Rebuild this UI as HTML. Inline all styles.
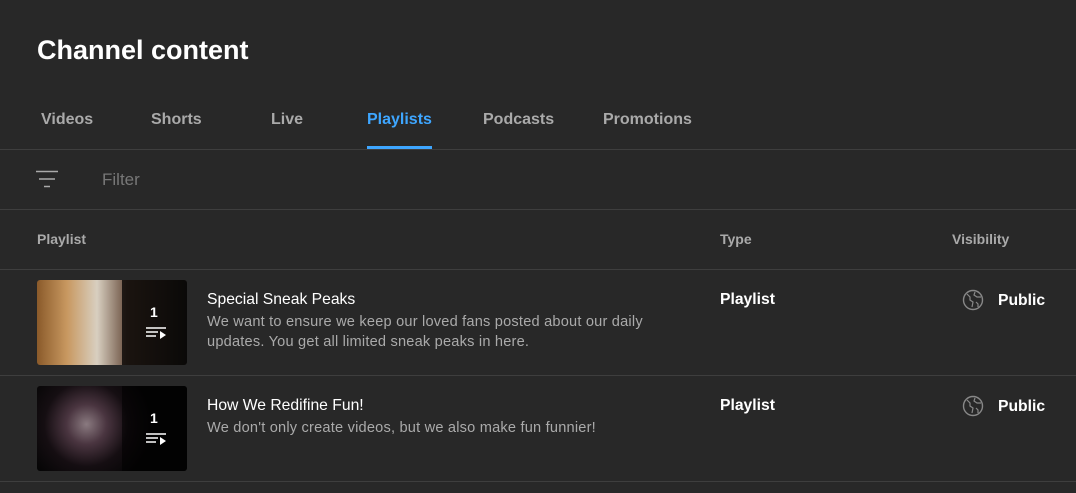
<!DOCTYPE html>
<html><head><style>
body{margin:0;width:1076px;height:493px;background:#282828;font-family:"Liberation Sans",sans-serif;position:relative;overflow:hidden;color:#fff}
.a{position:absolute;white-space:nowrap}
.tab{position:absolute;top:111px;font-size:16px;font-weight:bold;color:#aaa}
.line{position:absolute;left:0;width:1076px;height:1px;background:#3e3e3e}
.hd{position:absolute;top:231px;font-size:14px;color:#aaa;font-weight:bold}
.t{font-size:15.7px;color:#fff}
.d{font-size:14.6px;color:#aaa;line-height:20px;letter-spacing:0.2px}
.thumb{position:absolute;left:37px;width:150px;height:85px;border-radius:3px;overflow:hidden}
.ov{position:absolute;right:0;top:0;width:65px;height:85px;background:rgba(0,0,0,.75)}
.n{position:absolute;left:28px;top:24px;font-size:14px;font-weight:bold}
</style></head><body>
<div class="a" style="left:37px;top:35px;font-size:27px;font-weight:bold">Channel content</div>
<div class="tab" style="left:41px">Videos</div>
<div class="tab" style="left:151px">Shorts</div>
<div class="tab" style="left:271px">Live</div>
<div class="tab" style="left:367px;color:#3ea6ff">Playlists</div>
<div class="a" style="left:367px;top:146px;width:65px;height:3px;background:#3ea6ff"></div>
<div class="tab" style="left:483px">Podcasts</div>
<div class="tab" style="left:603px">Promotions</div>
<div class="line" style="top:149px"></div>
<svg class="a" style="left:35px;top:170px" width="24" height="18"><path d="M1 1.5h22M4 9h16M9 16.5h6" stroke="#aaa" stroke-width="1.5"/></svg>
<div class="a" style="left:102px;top:170px;font-size:17px;color:#777">Filter</div>
<div class="line" style="top:209px"></div>
<div class="hd" style="left:37px">Playlist</div>
<div class="hd" style="left:720px">Type</div>
<div class="hd" style="left:952px">Visibility</div>
<div class="line" style="top:269px"></div>

<div class="thumb" style="top:280px;background:linear-gradient(90deg,#8a5a2a 0,#c89860 20%,#d8cfc0 40%,#6a5040 60%,#2a2520 100%)"><div class="ov"><div class="n">1</div><svg style="position:absolute;left:24px;top:46px" width="22" height="14"><path d="M0 2h20M0 6h12M0 10h10" stroke="#fff" stroke-width="1.6"/><path d="M14 5l6 4-6 4z" fill="#fff"/></svg></div></div>
<div class="a t" style="left:207px;top:291px">Special Sneak Peaks</div>
<div class="a d" style="left:207px;top:312px">We want to ensure we keep our loved fans posted about our daily<br>updates. You get all limited sneak peaks in here.</div>
<div class="a t" style="left:720px;top:291px;font-weight:bold">Playlist</div>
<svg class="a" style="left:962px;top:289px" width="22" height="22"><circle cx="11" cy="11" r="9.5" fill="none" stroke="#888" stroke-width="1.4"/><path d="M5 5l3 3 0 3 3 2-1 5M13 3l-1 3 3 2 4 0M14 13l2 2 0 3" fill="none" stroke="#888" stroke-width="1.2"/></svg>
<div class="a t" style="left:998px;top:292px;font-weight:bold">Public</div>
<div class="line" style="top:375px"></div>

<div class="thumb" style="top:386px;background:radial-gradient(circle at 33% 45%,#8a7a80 0,#4a3540 18%,#150e12 38%,#050505 60%)"><div class="ov" style="background:rgba(0,0,0,.55)"><div class="n">1</div><svg style="position:absolute;left:24px;top:46px" width="22" height="14"><path d="M0 2h20M0 6h12M0 10h10" stroke="#fff" stroke-width="1.6"/><path d="M14 5l6 4-6 4z" fill="#fff"/></svg></div></div>
<div class="a t" style="left:207px;top:397px">How We Redifine Fun!</div>
<div class="a d" style="left:207px;top:418px">We don't only create videos, but we also make fun funnier!</div>
<div class="a t" style="left:720px;top:397px;font-weight:bold">Playlist</div>
<svg class="a" style="left:962px;top:395px" width="22" height="22"><circle cx="11" cy="11" r="9.5" fill="none" stroke="#888" stroke-width="1.4"/><path d="M5 5l3 3 0 3 3 2-1 5M13 3l-1 3 3 2 4 0M14 13l2 2 0 3" fill="none" stroke="#888" stroke-width="1.2"/></svg>
<div class="a t" style="left:998px;top:398px;font-weight:bold">Public</div>
<div class="line" style="top:481px"></div>
</body></html>
